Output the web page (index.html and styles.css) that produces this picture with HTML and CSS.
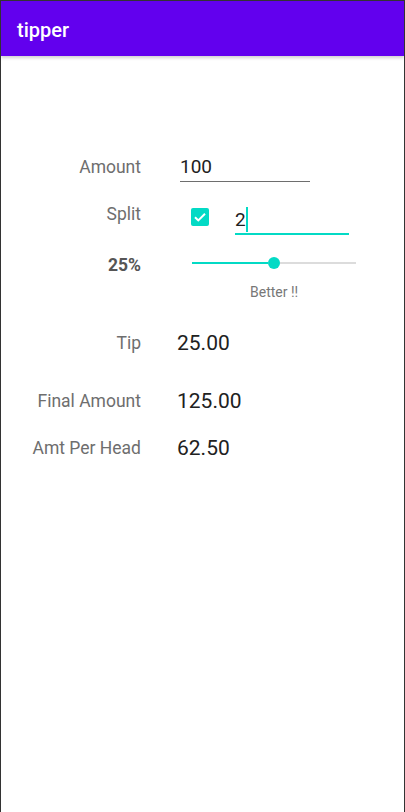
FILE: index.html
```html
<!DOCTYPE html>
<html>
<head>
<meta charset="utf-8">
<link rel="stylesheet" href="styles.css">
</head>
<body>
<div class="frame">
  <header class="appbar"><span class="title">tipper</span></header>
  <main class="content">
    <div class="row row-amount">
      <div class="label">Amount</div>
      <div class="field field-amount">100</div>
    </div>
    <div class="row row-split">
      <div class="label">Split</div>
      <div class="checkbox">
        <svg width="18" height="18" viewBox="0 0 18 18"><rect width="18" height="18" rx="2" fill="#03DAC5"/><path d="M4 9.2l3.3 3.2L14 5.8" fill="none" stroke="#fff" stroke-width="2"/></svg>
      </div>
      <div class="field field-split"><span>2</span><span class="cursor"></span></div>
    </div>
    <div class="row row-percent">
      <div class="label label-bold">25%</div>
      <div class="slider">
        <div class="track-active"></div>
        <div class="thumb"></div>
        <div class="track-inactive"></div>
      </div>
    </div>
    <div class="row row-better">
      <div class="better">Better !!</div>
    </div>
    <div class="row row-tip">
      <div class="label">Tip</div>
      <div class="value">25.00</div>
    </div>
    <div class="row row-final">
      <div class="label">Final Amount</div>
      <div class="value">125.00</div>
    </div>
    <div class="row row-head">
      <div class="label">Amt Per Head</div>
      <div class="value">62.50</div>
    </div>
  </main>
</div>
</body>
</html>
```
FILE: styles.css
```css
* { box-sizing: border-box; }
html, body { margin: 0; padding: 0; background: #fff; }
body { font-family: Roboto, "Noto Sans", sans-serif; }
.frame {
  width: 405px;
  height: 812px;
  border: 1px solid #333;
  border-bottom: none;
  overflow: hidden;
  background: #fff;
}
.appbar {
  height: 55px;
  background: #6200EE;
  display: flex;
  align-items: center;
  padding-left: 16px;
  box-shadow: 0 2px 3px rgba(0,0,0,0.18);
  position: relative;
}
.title {
  color: #fff;
  font-size: 20px;
  font-weight: 500;
  margin-top: 2px;
}
.content { padding-top: 91px; }
.row { display: flex; align-items: center; }
.label {
  width: 140px;
  flex: none;
  text-align: right;
  font-size: 17.5px;
  color: #6e6e6e;
}
.label-bold { font-weight: 700; color: #555; }
.row-amount { height: 40px; }
.field-amount {
  margin-left: 39px;
  width: 130px;
  height: 29px;
  line-height: 28px;
  font-size: 19px;
  color: #212121;
  border-bottom: 1px solid #6e6e6e;
  margin-top: 0px;
}
.row-split { height: 40px; margin-top: 7px; align-items: flex-start; }
.row-split .label { line-height: 40px; }
.checkbox { margin-left: 50px; margin-top: 14px; width: 18px; height: 18px; }
.checkbox svg { display: block; }
.field-split {
  margin-left: 26px;
  margin-top: 12px;
  width: 114px;
  height: 29px;
  border-bottom: 2px solid #03DAC5;
  font-size: 19px;
  color: #212121;
  line-height: 28px;
  display: flex;
  align-items: center;
}
.cursor { width: 2px; height: 25px; background: #03DAC5; }
.row-percent { height: 30px; margin-top: 16px; }
.slider {
  margin-left: 51px;
  width: 164px;
  height: 12px;
  display: flex;
  align-items: center;
  margin-top: -4px;
}
.track-active { width: 76px; height: 2px; background: #03DAC5; }
.thumb { width: 12px; height: 12px; border-radius: 50%; background: #03DAC5; flex: none; }
.track-inactive { flex: 1; height: 2px; background: #dcdcdc; }
.row-better { height: 20px; margin-top: 2px; }
.better { margin-left: 249px; font-size: 14px; color: #777; }
.row-tip { height: 30px; margin-top: 26px; }
.value { margin-left: 36px; font-size: 21px; color: #212121; }
.row-final { height: 30px; margin-top: 28px; }
.row-head { height: 30px; margin-top: 17px; }
```
